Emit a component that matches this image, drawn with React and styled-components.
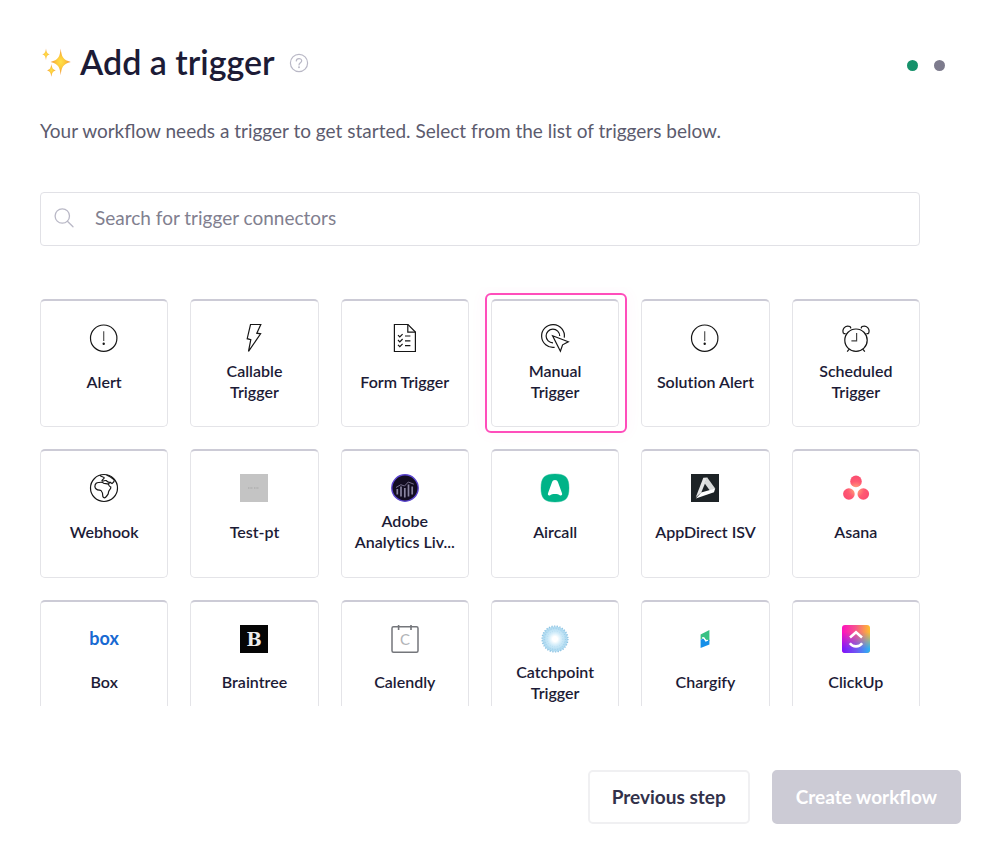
import styled, { createGlobalStyle } from 'styled-components';

const GlobalStyle = createGlobalStyle`
  * {
    box-sizing: border-box;
  }

  body {
    margin: 0;
    background: #ffffff;
    color: #1c1b36;
    font-family: 'Lato', 'Open Sans', sans-serif;
  }

  button,
  input {
    font-family: inherit;
  }
`;

const StyledPage = styled.main`
  display: flex;
  flex-direction: column;
  height: 100vh;
  min-height: 560px;
  padding: 40px 39px 42px 40px;
`;

const StyledHeader = styled.header`
  display: flex;
  align-items: center;
  justify-content: space-between;
  height: 46px;
  padding-right: 16px;
`;

const StyledTitleArea = styled.div`
  display: flex;
  align-items: center;
`;

const StyledTitle = styled.h1`
  margin: 0 14px 0 8px;
  padding-bottom: 3px;
  font-size: 34px;
  line-height: 42px;
  font-weight: 600;
`;

const HelpButton = styled.button`
  display: flex;
  padding: 0;
  border: 0;
  background: none;
  color: #b9b8c6;
`;

const StyledSteps = styled.div`
  display: flex;
  gap: 16px;
  padding-top: 5px;
`;

const StepDot = styled.span`
  width: 11px;
  height: 11px;
  border-radius: 50%;
  background: ${({ $active }) => ($active ? '#16926b' : '#7d7b8d')};
`;

const StyledDescription = styled.p`
  margin: 33px 0 49px;
  font-size: 19px;
  line-height: 24px;
  color: #5c5b6e;
`;

const SearchField = styled.label`
  display: flex;
  flex-shrink: 0;
  align-items: center;
  gap: 20px;
  height: 54px;
  margin-right: 41px;
  padding: 0 12px 2px;
  border: 1px solid #e1e1e6;
  border-radius: 4px;
  color: #b9b8c6;
`;

const SearchInput = styled.input`
  flex: 1;
  min-width: 0;
  padding: 0;
  border: 0;
  outline: 0;
  background: none;
  font-size: 19px;
  line-height: 24px;
  color: #1c1b36;

  &::placeholder {
    color: #81808f;
    opacity: 1;
  }
`;

const TriggerScroll = styled.section`
  flex: 1;
  min-height: 0;
  margin-top: 41px;
  padding: 12px 41px 0 0;
  overflow-y: auto;
  scrollbar-width: none;
`;

const TriggerGrid = styled.div`
  display: grid;
  grid-template-columns: repeat(6, minmax(0, 1fr));
  gap: 22px;
`;

const TriggerCard = styled.button`
  position: relative;
  display: flex;
  flex-direction: column;
  align-items: center;
  aspect-ratio: 1;
  padding: 23px 12px 0;
  border: 1px solid #e4e4e8;
  border-top: 2px solid #cccbd6;
  border-radius: 5px;
  background: #ffffff;
  color: #1c1b36;

  &[aria-pressed='true']::after {
    content: '';
    position: absolute;
    inset: -8px -9px -7px -7px;
    border: 2px solid #ff4dbb;
    border-radius: 6px;
    box-shadow: 0 0 16px rgba(255, 77, 187, 0.06);
  }
`;

const TriggerLabel = styled.span`
  display: flex;
  align-items: center;
  justify-content: center;
  width: 100%;
  height: 42px;
  margin-top: 8px;
  font-size: 16px;
  line-height: 21px;
  font-weight: 600;
  font-variant-ligatures: none;
  text-align: center;
`;

const StyledFooter = styled.footer`
  display: flex;
  justify-content: flex-end;
  gap: 22px;
  margin-top: 64px;
`;

const FooterButton = styled.button`
  height: 54px;
  padding: 0 22px;
  border: 2px solid ${({ $primary }) => ($primary ? '#cccbd5' : '#f0f0f2')};
  border-radius: 5px;
  background: ${({ $primary }) => ($primary ? '#cccbd5' : '#ffffff')};
  color: ${({ $primary }) => ($primary ? '#ffffff' : '#32314a')};
  font-size: 19px;
  line-height: 24px;
  font-weight: 700;
`;

const LineIcon = styled.svg.attrs({ viewBox: '0 0 28 28', width: 28, height: 28 })`
  display: block;
  flex-shrink: 0;
  overflow: visible;
  fill: none;
  stroke: #161616;
  stroke-width: 1.2;
`;

const LogoIcon = styled.svg.attrs({ viewBox: '0 0 28 28', width: 28, height: 28 })`
  display: block;
  flex-shrink: 0;
  overflow: visible;
`;

function SparklesIcon() {
  return (
    <svg width="32" height="32" viewBox="0 0 32 32" aria-hidden="true">
      <defs>
        <radialGradient id="sparkle">
          <stop offset="0" stopColor="#ffe14a" />
          <stop offset="0.4" stopColor="#fdcb3c" />
          <stop offset="1" stopColor="#f0903a" />
        </radialGradient>
      </defs>
      <g fill="url(#sparkle)">
        <path d="M20.7 1.5C21.6 9.8 23 13 30.8 14.9C23 16.8 21.6 20 20.7 28.3C19.8 20 18.4 16.8 10.6 14.9C18.4 13 19.8 9.8 20.7 1.5Z" />
        <path d="M6 1.4C6.5 5.2 7.2 6.6 9.8 7.3C7.2 8 6.5 9.4 6 13.2C5.5 9.4 4.8 8 2.2 7.3C4.8 6.6 5.5 5.2 6 1.4Z" />
        <path d="M11.4 17C12 21 12.8 22.6 15.8 23.4C12.8 24.2 12 25.8 11.4 29.8C10.8 25.8 10 24.2 7 23.4C10 22.6 10.8 21 11.4 17Z" />
      </g>
    </svg>
  );
}

function HelpIcon() {
  return (
    <svg width="20" height="20" viewBox="0 0 20 20" fill="none" stroke="currentColor" strokeWidth="1.2" aria-hidden="true">
      <circle cx="10" cy="10" r="8.6" />
      <path d="M7.3 8C7.3 4.8 12.7 4.8 12.7 7.8C12.7 9.8 10 9.8 10 12" strokeLinecap="round" />
      <circle cx="10" cy="14.3" r="0.4" />
    </svg>
  );
}

function SearchIcon() {
  return (
    <svg width="22" height="22" viewBox="0 0 22 22" fill="none" stroke="currentColor" strokeWidth="1.3" aria-hidden="true">
      <circle cx="9.3" cy="9" r="7.2" />
      <path d="M14.4 14.2L20 19.8" strokeLinecap="round" />
    </svg>
  );
}

function AlertIcon() {
  return (
    <LineIcon>
      <circle cx="13.7" cy="14.2" r="13.2" />
      <path d="M13.7 7.3V17" stroke="#555555" />
      <circle cx="13.7" cy="19.8" r="0.6" fill="#161616" />
    </LineIcon>
  );
}

function BoltIcon() {
  return (
    <LineIcon>
      <path d="M10.5 0.5H20.8L16.8 9.2L20.6 9.8L8.5 27.3L10.8 15.6L7.2 14.7Z" />
    </LineIcon>
  );
}

function FormIcon() {
  return (
    <LineIcon>
      <path d="M3.4 0.5H17L24.4 8V27.5H3.4Z" />
      <path d="M16.8 0.5V8.2H24.4" />
      <path d="M7 11.2L8.8 13L11.6 10.2M7 16L8.8 17.8L11.6 15M7 20.8L8.8 22.6L11.6 19.8" />
      <path d="M14 12H19.4M14 16.8H19.4M14 21.6H19.4" />
    </LineIcon>
  );
}

function ManualIcon() {
  return (
    <LineIcon>
      <path d="M23.3 13.6A11.4 11.4 0 1 0 13.6 23.3" />
      <path d="M18.7 12A6.8 6.8 0 1 0 12 18.8" />
      <path d="M11.6 11.8L27.3 17.8L21.6 20.8L19.4 27.2Z" />
    </LineIcon>
  );
}

function ClockIcon() {
  return (
    <LineIcon>
      <circle cx="14" cy="16.2" r="11.2" />
      <path d="M1.5 9.6C-0.5 5 3.5 0.7 8 2.5L9 4.4M1.5 9.6L3.6 9.6M26.5 9.6C28.5 5 24.5 0.7 20 2.5L19 4.4M26.5 9.6L24.4 9.6" />
      <path d="M7 25.4L5.2 27.6M21 25.4L22.8 27.6" />
      <path d="M14.6 9V16.8H9.4" stroke="#444444" />
    </LineIcon>
  );
}

function GlobeIcon() {
  return (
    <LineIcon>
      <circle cx="14" cy="14" r="13.5" />
      <path d="M4.9 12.6C4.9 9.5 7 8.3 9 8.5C11 8 12.4 8 13.6 9.2C15 10 17 9.1 18.4 10.2C18.8 11.8 19.4 12.7 20.8 13.1C21.2 15 18.8 16 18.5 18.2C18.7 20.5 16.9 21.4 15.7 23.3C14.2 24.4 12.6 23.5 12.7 21.3C13 19.5 12.2 18 11 16.5C9 15.9 5.3 16.5 4.9 12.6Z" />
      <path d="M9.8 1.2C11 3 14.8 2.6 14 4.4C13 5.6 11.4 5.7 12 7C13.8 7.6 14.6 6 16.2 6.6C17.4 7.4 18.4 8.7 20 8.2L22 9.6C23.2 8.6 24.7 7.6 24.3 5.4M18.4 10.2L20 8.2M16.5 1L20.5 3L24.5 6" />
    </LineIcon>
  );
}

function PlaceholderIcon() {
  return (
    <LogoIcon>
      <rect width="28" height="28" fill="#c4c4c4" />
      <path d="M8 14H13M14 14H19" stroke="#b4b4b4" strokeWidth="2" strokeDasharray="1 0.6" />
    </LogoIcon>
  );
}

function AdobeAnalyticsIcon() {
  return (
    <LogoIcon>
      <circle cx="14" cy="14" r="13.2" fill="#130d22" stroke="#5b45cf" strokeWidth="1.4" />
      <path d="M6.3 15V20.5M10 12.5V22.5M13.8 14V23.5M17.5 10.5V22.5M21.2 12.5V20.5" stroke="#8984a0" strokeWidth="1.7" />
      <path d="M5 13.5L9.8 10.7L13.5 12L17.3 8L22.8 10.2" fill="none" stroke="#77708e" />
    </LogoIcon>
  );
}

function AircallIcon() {
  return (
    <LogoIcon>
      <path
        d="M14 0C24.5 0 28 3.5 28 14S24.5 28 14 28S0 24.5 0 14S3.5 0 14 0Z"
        fill="#00b388"
        stroke="#00b388"
        strokeWidth="0.4"
      />
      <path
        d="M14 6C15.6 6 16.4 6.7 17 8.2L21 19.2C21.5 20.8 20.6 21.8 19 21.4C18.2 21.2 17.8 20.4 16.9 20.3C15 20 13 20 11.1 20.3C10.2 20.4 9.8 21.2 9 21.4C7.4 21.8 6.5 20.8 7 19.2L11 8.2C11.6 6.7 12.4 6 14 6Z"
        fill="#ffffff"
      />
    </LogoIcon>
  );
}

function AppDirectIcon() {
  return (
    <LogoIcon>
      <rect width="28" height="28" fill="#1d2326" />
      <path d="M12.3 3.7L16.4 3.5L10.3 18.6L4.8 23.2Z" fill="#e5e6e6" />
      <path d="M16.2 3.5L24.2 14.5L19.2 17L13.4 9Z" fill="#d8dada" />
      <path d="M24.2 14.5L23 18.2L4.8 24.4L10.2 18.6Z" fill="#ffffff" />
    </LogoIcon>
  );
}

function AsanaIcon() {
  return (
    <LogoIcon>
      <defs>
        <radialGradient id="asana" gradientUnits="userSpaceOnUse" cx="14" cy="15.5" r="15">
          <stop offset="0" stopColor="#ffb07a" />
          <stop offset="0.55" stopColor="#ff5a72" />
          <stop offset="1" stopColor="#fa4a70" />
        </radialGradient>
      </defs>
      <g fill="url(#asana)">
        <circle cx="14" cy="7.4" r="5.8" />
        <circle cx="6.9" cy="20" r="5.8" />
        <circle cx="21.3" cy="20" r="5.8" />
      </g>
    </LogoIcon>
  );
}

function BoxIcon() {
  return (
    <LogoIcon>
      <text x="14" y="20" textAnchor="middle" fontFamily="Lato, sans-serif" fontSize="18" fontWeight="700" fill="#1769d2">
        box
      </text>
    </LogoIcon>
  );
}

function BraintreeIcon() {
  return (
    <LogoIcon>
      <rect width="28" height="28" fill="#050505" />
      <text x="14" y="21" textAnchor="middle" fontFamily="'DejaVu Serif', serif" fontSize="18" fontWeight="700" fill="#ededed">
        B
      </text>
    </LogoIcon>
  );
}

function CalendlyIcon() {
  return (
    <LogoIcon>
      <rect x="1" y="1.8" width="26" height="25.4" rx="1.5" fill="none" stroke="#74767b" strokeWidth="1.5" />
      <path d="M7.6 0V5M20 0V5" stroke="#74767b" strokeWidth="1.6" />
      <text x="14" y="20.4" textAnchor="middle" fontFamily="Lato, sans-serif" fontSize="15" fill="#b2b4b8">
        C
      </text>
    </LogoIcon>
  );
}

function CatchpointIcon() {
  return (
    <LogoIcon>
      <defs>
        <radialGradient id="catchpoint">
          <stop offset="0.2" stopColor="#ffffff" />
          <stop offset="0.5" stopColor="#d3edfa" />
          <stop offset="1" stopColor="#a9d7ef" />
        </radialGradient>
      </defs>
      <circle cx="14" cy="14" r="12.6" fill="url(#catchpoint)" />
      <g fill="none" stroke="#8dc3e3">
        <circle cx="14" cy="14" r="12.9" strokeWidth="1.4" strokeDasharray="1.3 1.4" />
        <circle cx="14" cy="14" r="10.4" strokeWidth="0.9" strokeDasharray="1 1.6" opacity="0.7" />
        <circle cx="14" cy="14" r="7.8" strokeWidth="0.7" strokeDasharray="0.8 1.6" opacity="0.4" />
      </g>
    </LogoIcon>
  );
}

function ChargifyIcon() {
  return (
    <LogoIcon>
      <path d="M9.6 9.4L18.4 5V16.2L14.8 14.6L13.3 12.6L9.6 14.4Z" fill="#38c184" />
      <path d="M9.6 14.4L12.6 13.8L14.6 16.8L18.4 14.8V19.4L9.6 23Z" fill="#168fe8" />
      <path d="M11 12.8L13 12.6L14.8 15.8L17 15.2" fill="none" stroke="#ffffff" strokeWidth="1" />
    </LogoIcon>
  );
}

function ClickUpIcon() {
  return (
    <LogoIcon>
      <defs>
        <linearGradient id="clickup-top" x1="0" y1="0" x2="1" y2="0">
          <stop offset="0" stopColor="#ff0fc0" />
          <stop offset="0.5" stopColor="#f5588a" />
          <stop offset="1" stopColor="#ffc02c" />
        </linearGradient>
        <linearGradient id="clickup-bottom" x1="0" y1="0" x2="1" y2="0">
          <stop offset="0" stopColor="#7f12fb" />
          <stop offset="0.5" stopColor="#6f55f2" />
          <stop offset="1" stopColor="#2bb5f4" />
        </linearGradient>
        <linearGradient id="clickup-fade" x1="0" y1="0" x2="0" y2="1">
          <stop offset="0.25" stopColor="#000000" />
          <stop offset="0.85" stopColor="#ffffff" />
        </linearGradient>
        <mask id="clickup-mask">
          <rect width="28" height="28" fill="url(#clickup-fade)" />
        </mask>
      </defs>
      <rect width="28" height="28" rx="3" fill="url(#clickup-top)" />
      <rect width="28" height="28" rx="3" fill="url(#clickup-bottom)" mask="url(#clickup-mask)" />
      <path d="M8 12.4L14 7.2L20 12.4M7.8 18.2C11 22.4 17 22.4 20.2 18.2" fill="none" stroke="#ffffff" strokeWidth="2.6" />
    </LogoIcon>
  );
}

const triggers = [
  { name: 'Alert', Icon: AlertIcon },
  { name: 'Callable Trigger', Icon: BoltIcon },
  { name: 'Form Trigger', Icon: FormIcon },
  { name: 'Manual Trigger', Icon: ManualIcon, selected: true },
  { name: 'Solution Alert', Icon: AlertIcon },
  { name: 'Scheduled Trigger', Icon: ClockIcon },
  { name: 'Webhook', Icon: GlobeIcon },
  { name: 'Test-pt', Icon: PlaceholderIcon },
  { name: 'Adobe Analytics Liv...', Icon: AdobeAnalyticsIcon },
  { name: 'Aircall', Icon: AircallIcon },
  { name: 'AppDirect ISV', Icon: AppDirectIcon },
  { name: 'Asana', Icon: AsanaIcon },
  { name: 'Box', Icon: BoxIcon },
  { name: 'Braintree', Icon: BraintreeIcon },
  { name: 'Calendly', Icon: CalendlyIcon },
  { name: 'Catchpoint Trigger', Icon: CatchpointIcon },
  { name: 'Chargify', Icon: ChargifyIcon },
  { name: 'ClickUp', Icon: ClickUpIcon },
];

function App() {
  return (
    <>
      <GlobalStyle />
      <StyledPage>
        <StyledHeader>
          <StyledTitleArea>
            <SparklesIcon />
            <StyledTitle>Add a trigger</StyledTitle>
            <HelpButton type="button" aria-label="Help">
              <HelpIcon />
            </HelpButton>
          </StyledTitleArea>
          <StyledSteps>
            <StepDot $active />
            <StepDot />
          </StyledSteps>
        </StyledHeader>
        <StyledDescription>
          Your workflow needs a trigger to get started. Select from the list of triggers below.
        </StyledDescription>
        <SearchField>
          <SearchIcon />
          <SearchInput type="text" placeholder="Search for trigger connectors" aria-label="Search for trigger connectors" />
        </SearchField>
        <TriggerScroll>
          <TriggerGrid>
            {triggers.map(({ name, Icon, selected }) => (
              <TriggerCard key={name} type="button" aria-pressed={Boolean(selected)}>
                <Icon />
                <TriggerLabel>{name}</TriggerLabel>
              </TriggerCard>
            ))}
          </TriggerGrid>
        </TriggerScroll>
        <StyledFooter>
          <FooterButton type="button">Previous step</FooterButton>
          <FooterButton type="button" $primary disabled>
            Create workflow
          </FooterButton>
        </StyledFooter>
      </StyledPage>
    </>
  );
}

export default App;
